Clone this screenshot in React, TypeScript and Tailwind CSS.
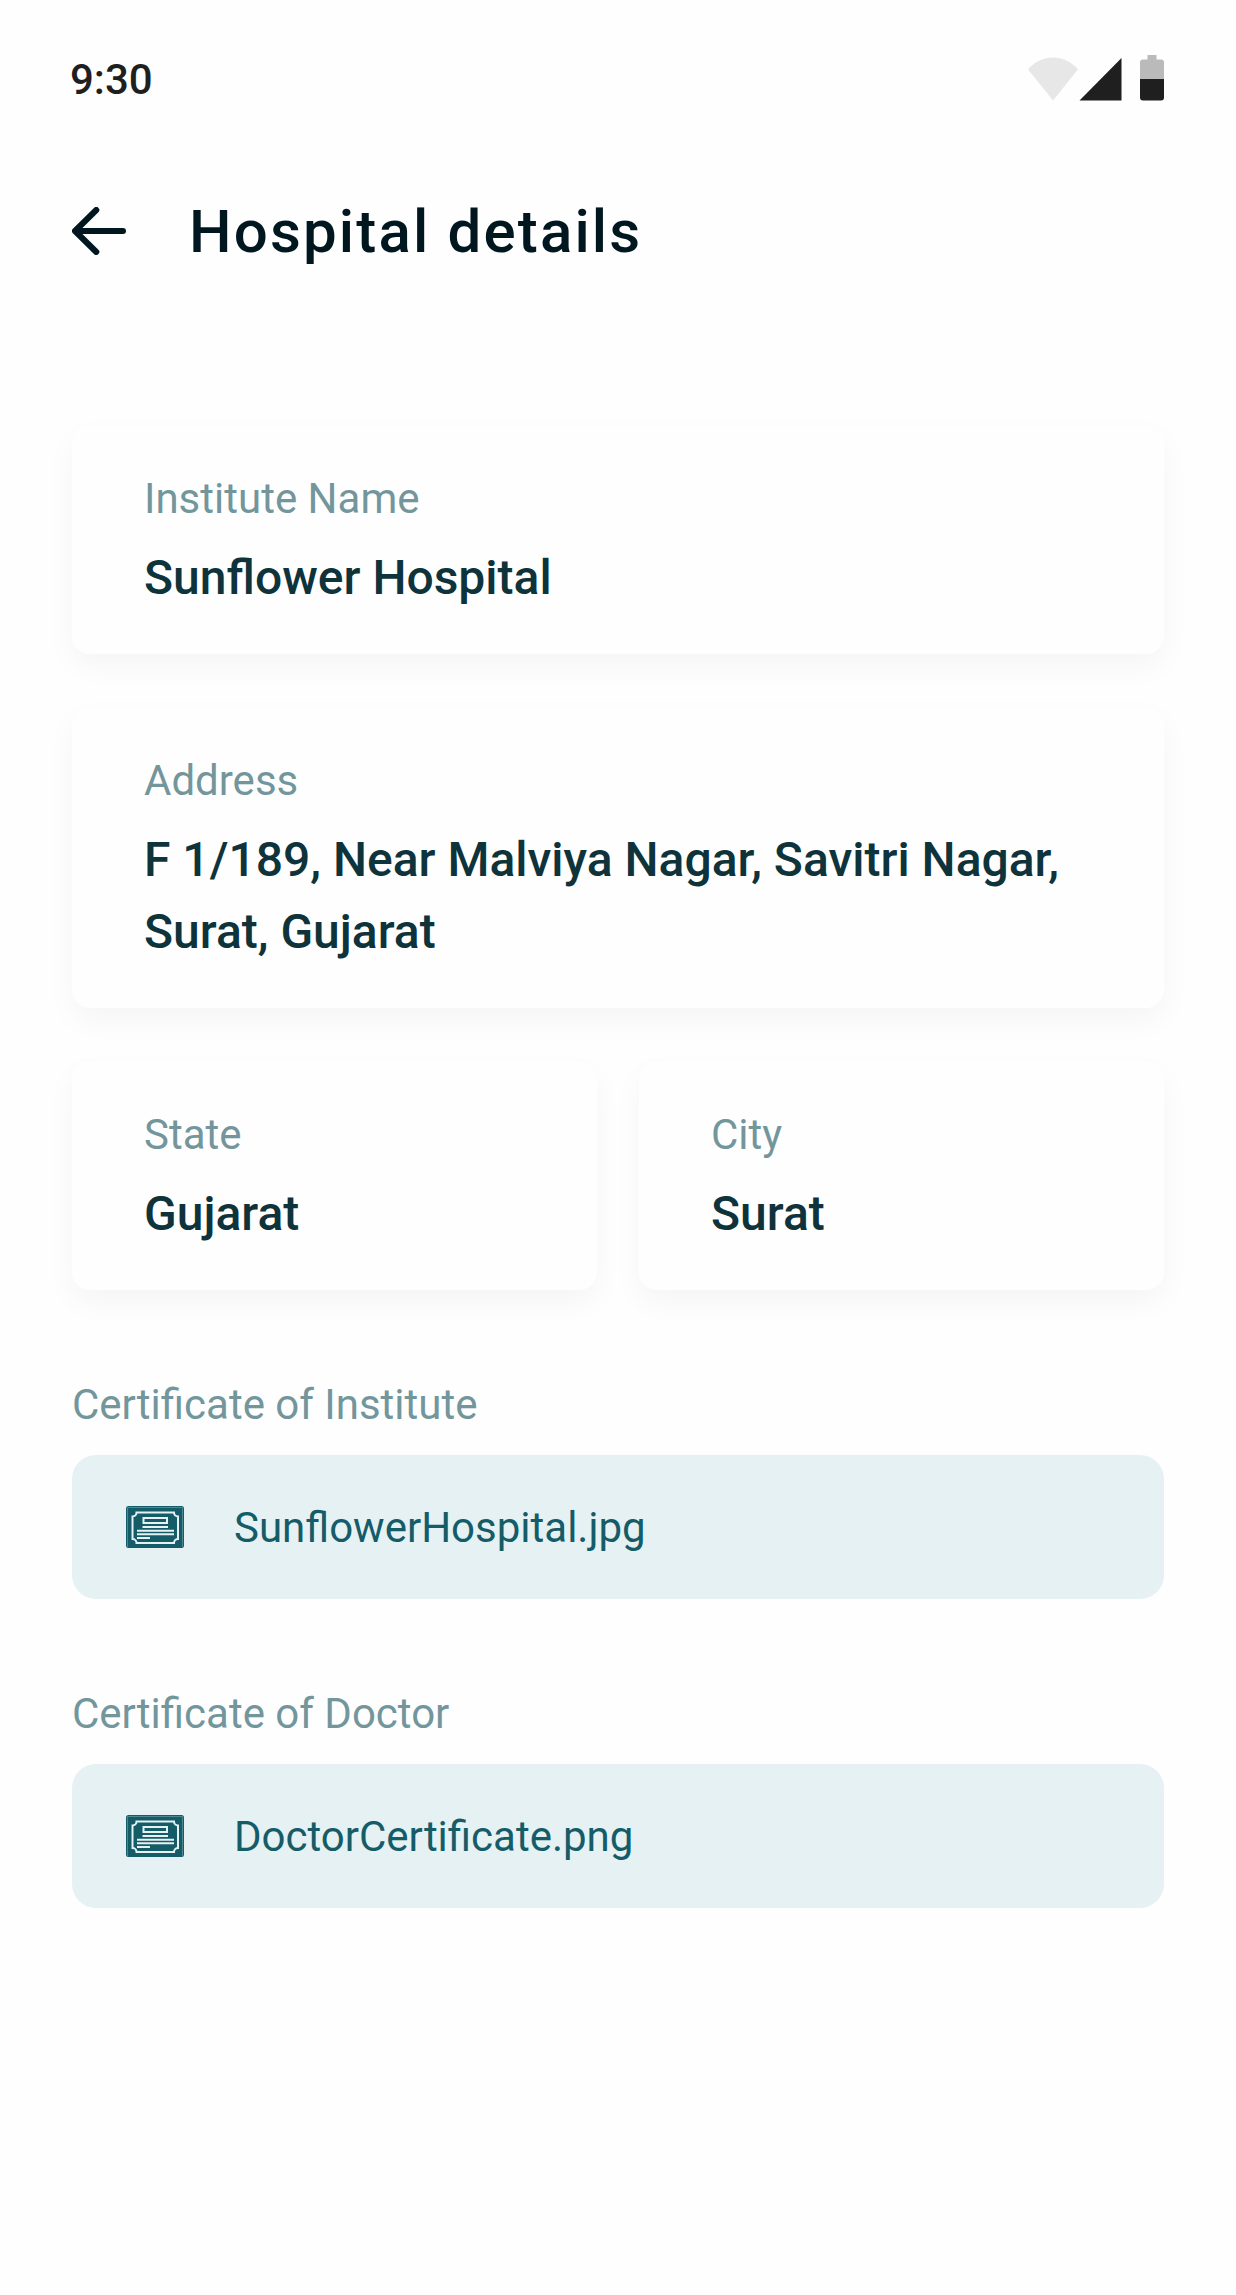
import type { ReactNode } from "react";

function StatusBar() {
  return (
    <div className="flex h-[156px] items-center justify-between pr-[72px] pl-[70px]">
      <span className="mt-[4px] text-[42px] leading-[60px] font-medium text-[#1f1f1f]">9:30</span>
      <svg className="h-[46px] w-[136px]" viewBox="0 0 136 46" fill="none">
        <path d="M0 14.3C6.500 7 15.500 2.500 25 2.500s18.500 4.500 25 11.800L25 45.500Z" fill="#e7e7e7" />
        <path d="M51.500 45.500 93.500 3v42.500Z" fill="#1f1f1f" />
        <path d="M119.500 0h9v4.500h4.500a3 3 0 0 1 3 3V24h-24V7.500a3 3 0 0 1 3-3h4.500Z" fill="#bababa" />
        <path d="M112 24h24v18.500a3 3 0 0 1-3 3h-18a3 3 0 0 1-3-3Z" fill="#1f1f1f" />
      </svg>
    </div>
  );
}

function Header() {
  return (
    <header className="flex h-[150px] items-center">
      <svg className="h-[48px] w-[54px]" viewBox="0 0 54 48" fill="none" stroke="#001720" strokeWidth="6" strokeLinecap="round" strokeLinejoin="round">
        <path d="M51 24H3M24.300 3 3 24l21.300 21" />
      </svg>
      <h1 className="mt-[2px] ml-[63px] text-[60px] leading-[72px] font-medium tracking-[2.16px] text-[#001720]">Hospital details</h1>
    </header>
  );
}

function Field({ label, children }: { label: string; children: ReactNode }) {
  return (
    <div className="rounded-[18px] bg-[#fefefe] px-[72px] pt-[43px] pb-[40px] shadow-[0_12px_30px_rgba(0,0,0,0.04)]">
      <div className="text-[42px] leading-[60px] text-[#73969c]">{label}</div>
      <div className="mt-[13px] text-[48px] leading-[72px] font-medium text-[#0e333b]">{children}</div>
    </div>
  );
}

function CertificateIcon() {
  return (
    <svg className="h-[42px] w-[58px]" viewBox="0 0 58 42" fill="none" stroke="#e6f1f4" strokeWidth="2">
      <rect width="58" height="42" rx="2.500" fill="#155c69" stroke="none" />
      <path d="M1.500 41V1.500h55V41" stroke="#5f939c" strokeWidth="0.8" />
      <path d="M10.500 6.500h37.500a4 4 0 0 0 4 4v22.500a4 4 0 0 0-4 4H10.500a4 4 0 0 0-4-4V10.500a4 4 0 0 0 4-4Z" />
      <path d="M17.500 12h23.500v5H17.500Z" />
      <path d="M16.500 21h25.500M11 24.700h37M11 28.300h37M11 32h13" />
    </svg>
  );
}

function Certificate({ label, file }: { label: string; file: string }) {
  return (
    <section>
      <h2 className="text-[42px] leading-[60px] text-[#73969c]">{label}</h2>
      <div className="mt-[20px] flex h-[144px] items-center rounded-[24px] bg-[#e6f1f3] pl-[54px]">
        <CertificateIcon />
        <span className="mt-[2px] ml-[50px] text-[42px] leading-[60px] text-[#155c69]">{file}</span>
      </div>
    </section>
  );
}

export default function App() {
  return (
    <div className="min-h-[2295px] w-[1236px] bg-[#fefefe] font-['Roboto',sans-serif]">
      <StatusBar />
      <main className="px-[72px]">
        <Header />
        <div className="mt-[120px] flex flex-col gap-[54px]">
          <Field label="Institute Name">Sunflower Hospital</Field>
          <Field label="Address">
            F 1/189, Near Malviya Nagar, Savitri Nagar,
            <br />
            Surat, Gujarat
          </Field>
          <div className="grid grid-cols-2 gap-[42px]">
            <Field label="State">Gujarat</Field>
            <Field label="City">Surat</Field>
          </div>
        </div>
        <div className="mt-[85px] flex flex-col gap-[85px]">
          <Certificate label="Certificate of Institute" file="SunflowerHospital.jpg" />
          <Certificate label="Certificate of Doctor" file="DoctorCertificate.png" />
        </div>
      </main>
    </div>
  );
}
